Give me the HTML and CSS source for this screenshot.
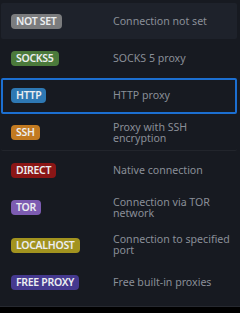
FILE: index.html
```html
<!DOCTYPE html>
<html>
  <head>
    <link rel="stylesheet" href="styles.css">
  </head>
  <body>
    <ul class="proxy-list">
      <li class="proxy-row hovered">
        <span class="tag tag-none">NOT SET</span>
        <span class="desc">Connection not set</span>
      </li>
      <li class="proxy-row">
        <span class="tag tag-socks">SOCKS5</span>
        <span class="desc">SOCKS 5 proxy</span>
      </li>
      <li class="proxy-row selected">
        <span class="tag tag-http">HTTP</span>
        <span class="desc">HTTP proxy</span>
      </li>
      <li class="proxy-row divided">
        <span class="tag tag-ssh">SSH</span>
        <span class="desc">Proxy with SSH encryption</span>
      </li>
      <li class="proxy-row">
        <span class="tag tag-direct">DIRECT</span>
        <span class="desc">Native connection</span>
      </li>
      <li class="proxy-row">
        <span class="tag tag-tor">TOR</span>
        <span class="desc">Connection via TOR network</span>
      </li>
      <li class="proxy-row">
        <span class="tag tag-local">LOCALHOST</span>
        <span class="desc">Connection to specified port</span>
      </li>
      <li class="proxy-row">
        <span class="tag tag-free">FREE PROXY</span>
        <span class="desc">Free built-in proxies</span>
      </li>
    </ul>
  </body>
</html>
```

FILE: styles.css
```css
* {
  margin: 0;
  padding: 0;
  box-sizing: border-box;
}

html, body {
  background: #000;
}

body {
  width: 240px;
  height: 313px;
  font-family: "Noto Sans", sans-serif;
}

.proxy-list {
  list-style: none;
  background: #171a21;
  height: 307px;
  padding: 2.5px 3px 0 1px;
  border-bottom: 1px solid #262930;
  display: grid;
  grid-auto-rows: 37.33px;
}

.proxy-row {
  display: grid;
  grid-template-columns: 102px 1fr;
  align-items: center;
  padding-left: 10px;
  margin: 0.5px 0;
  border-radius: 2px;
}

.proxy-row.hovered {
  background: #1e222b;
}

.proxy-row.selected {
  border: 2px solid #1c6fd1;
  padding-left: 8px;
}

.proxy-row.divided {
  border-bottom: 1px solid #22252c;
}

.tag {
  justify-self: start;
  height: 15px;
  line-height: 15px;
  padding: 0 5px;
  border-radius: 4px;
  font-size: 10.5px;
  font-weight: 600;
  color: #eceef0;
  letter-spacing: -0.3px;
}

.desc {
  font-size: 10.6px;
  line-height: 11px;
  color: #8a8f98;
}

.tag-none { background: #7b7c7e; }
.tag-socks { background: #4b7a3b; }
.tag-http { background: #2e78b3; }
.tag-ssh { background: #c27a21; }
.tag-direct { background: #8a1616; }
.tag-tor { background: #7d5cb2; }
.tag-local { background: #a2931f; }
.tag-free { background: #45398f; }
```
